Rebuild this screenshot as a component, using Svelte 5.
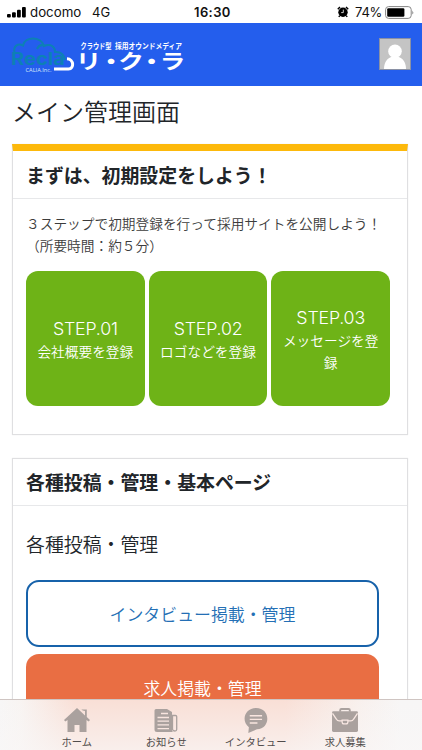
<script>
  const steps = [
    { no: 'STEP.01', label: '会社概要を登録' },
    { no: 'STEP.02', label: 'ロゴなどを登録' },
    { no: 'STEP.03', label: 'メッセージを登録' }
  ];
  const kana = [
    { ch: 'リ', x: 79.5 },
    { ch: '・', x: 102 },
    { ch: 'ク', x: 122 },
    { ch: '・', x: 142.5 },
    { ch: 'ラ', x: 163.5 }
  ];
</script>

<div class="screen">
  <div class="status">
    <svg class="signal" width="19" height="12" viewBox="0 0 19 12">
      <rect x="0" y="8" width="3.8" height="3.6" rx="1" />
      <rect x="5" y="6.3" width="3.8" height="5.3" rx="1" />
      <rect x="10" y="3.8" width="3.8" height="7.8" rx="1" />
      <rect x="15" y="1" width="3.8" height="10.6" rx="1" />
    </svg>
    <span class="carrier">docomo</span>
    <span class="net">4G</span>
    <span class="time">16:30</span>
    <svg class="alarm" width="12" height="12" viewBox="0 0 12 12">
      <circle cx="6" cy="6.2" r="4.7" />
      <path d="M.8 3.2 3 1M11.2 3.2 9 1M2.8 9.6l-1 1.3M9.2 9.6l1 1.3" fill="none" stroke="#000" stroke-width="1.5" />
      <path d="M6.3 3.6v3H4.2" fill="none" stroke="#fff" stroke-width=".8" />
    </svg>
    <span class="percent">74%</span>
    <svg class="battery" width="30" height="13" viewBox="0 0 30 13">
      <rect x=".6" y=".6" width="25.6" height="11.8" rx="3" fill="#fff" stroke="#858585" />
      <rect x="2.2" y="2.2" width="17.2" height="8.6" rx="1.2" />
      <path d="M27.4 4.5q1.7 2 0 4z" fill="#777" />
    </svg>
  </div>

  <header>
    <svg class="logo" width="180" height="40" viewBox="0 0 180 40">
      <g fill="none" stroke="#0d80b5" stroke-width="2.1">
        <path d="M5.500 15.500C4 9 9 6 14 8.500 16-1 32-1 35 9c7-3 11 1 11 6 6-.5 9 3 10 8" />
        <path d="M28 12c2-4 5-4.500 8-3" />
      </g>
      <text x="2" y="27.500" class="recla" textLength="54" lengthAdjust="spacingAndGlyphs">Recla</text>
      <text x="16.500" y="34.500" class="calia" textLength="26" lengthAdjust="spacingAndGlyphs">CALIA.Inc.</text>
      <path d="M45 32H59.500c6 0 5.500-10-1.500-10.300" fill="none" stroke="#fff" stroke-width="3" />
      <g class="cjk" fill="#fff">
        <text x="71.500" y="12.200" textLength="31" lengthAdjust="spacingAndGlyphs">クラウド型</text>
        <text x="106" y="12.200" textLength="67" lengthAdjust="spacingAndGlyphs">採用オウンドメディア</text>
        {#each kana as k}
          <text class="kana" transform="translate({k.x} 32.200) scale(1.25 1)">{k.ch}</text>
        {/each}
      </g>
    </svg>
    <svg class="avatar" width="32" height="32" viewBox="0 0 32 32">
      <rect x=".5" y=".5" width="31" height="31" fill="#c4c4c4" stroke="#8a91a5" />
      <circle cx="16" cy="13.2" r="6.8" fill="#fff" />
      <path d="M5 31c0-7 3.500-10.500 7-12h8c3.500 1.500 7 5 7 12z" fill="#fff" />
    </svg>
  </header>

  <main>
    <h1>メイン管理画面</h1>

    <section class="card setup">
      <h2>まずは、初期設定をしよう！</h2>
      <p>３ステップで初期登録を行って採用サイトを公開しよう！<br />（所要時間：約５分）</p>
      <div class="steps">
        {#each steps as step}
          <div class="step"><span class="no">{step.no}</span><span class="label">{step.label}</span></div>
        {/each}
      </div>
    </section>

    <section class="card posts">
      <h2>各種投稿・管理・基本ページ</h2>
      <h3>各種投稿・管理</h3>
      <div class="btn outline">インタビュー掲載・管理</div>
      <div class="btn solid">求人掲載・管理</div>
    </section>
  </main>

  <nav>
    <div class="item">
      <svg width="26" height="25" viewBox="0 0 26 25">
        <path d="M13 0 0 12l1.300 1.500L3.500 12v12h7v-7h5v7h7V12l2.200 1.500L26 12l-3.200-3V1.500h-5.500l1.500 1L21 3v4.500z" />
      </svg>
      <span>ホーム</span>
    </div>
    <div class="item">
      <svg width="24" height="25" viewBox="0 0 24 25">
        <path d="M2 1h11l5 3v18q0 2 1.500 2H3q-2.500 0-2.500-2.500V2.500Q.5 1 2 1z" />
        <path d="M18.500 7.500h3q1.200 0 1.200 1v13q0 1.500-1.800 1.500t-2.400-1.500z" fill="none" stroke="#aaa19e" stroke-width="1.300" />
        <path d="M7 5.500h7M3.500 9.500h11.500M3.500 13.200h11.500M3.500 16.900h11.500M3.500 20.600h11.500" stroke="#f8e5df" stroke-width="1.300" />
      </svg>
      <span>お知らせ</span>
    </div>
    <div class="item">
      <svg width="24" height="26" viewBox="0 0 24 26">
        <path d="M12 0c15.500 0 15.500 21.500 1 22.200L4 26l.6-6C-4 13.500.5 0 12 0z" />
        <path d="M5.500 8h12.800M5.500 11.800h12.800M5.500 15.500h8" stroke="#f9e6e0" stroke-width="1.500" />
      </svg>
      <span>インタビュー</span>
    </div>
    <div class="item">
      <svg width="28" height="26" viewBox="0 0 28 26">
        <path d="M9 4V2.300Q9 1 10.300 1h7.400Q19 1 19 2.300V4" fill="none" stroke="#aaa19e" stroke-width="2" />
        <path d="M2 3.500h24q1.500 0 1.500 1.500v18.500q0 1.500-1.500 1.500H2q-1.500 0-1.500-1.500V5Q.5 3.500 2 3.500z" />
        <path d="M1 5.500 5 11.500q1 2 3 2h3M27 5.500l-4 6q-1 2-3 2h-3M11 12.500h6v2q0 2-2 2h-2q-2 0-2-2z" fill="none" stroke="#f9e8e3" stroke-width="1.300" />
      </svg>
      <span>求人募集</span>
    </div>
  </nav>
</div>

<style>
  .screen {
    position: relative;
    display: flex;
    flex-direction: column;
    width: 422px;
    height: 750px;
    overflow: hidden;
    background: #fff;
    color: #212529;
    font-family: Inter, "Noto Sans CJK JP", sans-serif;
    font-weight: 350;
  }
  .screen * { box-sizing: border-box; }
  svg { display: block; flex: none; }
  .status {
    display: flex;
    align-items: center;
    flex: none;
    height: 23px;
    padding: 1px 5px 0 7px;
    color: #111;
    font: 400 13px/22px Inter, sans-serif;
  }
  .signal { margin: 0 4px 1px 0; }
  .carrier { width: 62px; font-size: 13.300px; }
  .net { width: 102px; }
  .time { width: 143px; font-weight: 600; letter-spacing: .4px; }
  .percent { width: 29px; margin-left: 6px; font-size: 13px; letter-spacing: -.2px; }
  .battery { margin-left: 1px; }
  header {
    display: flex;
    justify-content: space-between;
    flex: none;
    height: 63px;
    padding: 14px 11px 0 9px;
    background: #245eed;
  }
  .cjk { font: 700 7.500px "Noto Sans CJK JP", sans-serif; }
  .kana { font-size: 20.500px; text-anchor: middle; }
  .logo { overflow: visible; }
  .avatar { margin-top: 1px; }
  .recla { fill: #0d80b5; font: 700 17px Inter, sans-serif; }
  .calia { fill: #d7e8fb; font: 400 5.500px "Open Sans", sans-serif; }
  main {
    display: flex;
    flex-direction: column;
    flex: none;
    padding: 0 14px 0 12px;
  }
  h1, h2, h3, p { margin: 0; }
  h1 {
    height: 58px;
    font-size: 24px;
    font-weight: 350;
    line-height: 53px;
  }
  .card {
    display: flex;
    flex-direction: column;
    border: 1px solid #dfdfe1;
    box-shadow: 0 0 1px #e4e4e4;
  }
  .setup {
    height: 291px;
    margin-bottom: 23px;
    border-width: 7px 1px 1px;
    border-top-color: #fdb90b;
  }
  .posts { height: 310px; }
  h2 {
    height: 48px;
    padding-left: 13px;
    border-bottom: 1px solid #e7e8ea;
    font-size: 18.900px;
    font-weight: 600;
    line-height: 51px;
  }
  .posts h2 { height: 47px; line-height: 49px; }
  p {
    padding: 15px 0 0 13px;
    color: #3c3c3c;
    font-size: 13.700px;
    line-height: 21.500px;
    white-space: nowrap;
  }
  .steps { display: flex; gap: 4px; margin: 14px 17px 0 13px; }
  .step {
    display: flex;
    flex: 1 1 0;
    flex-direction: column;
    align-items: center;
    justify-content: center;
    height: 135px;
    padding: 2px 6px 0;
    border-radius: 12px;
    background: #6eb317;
    color: #fff;
    text-align: center;
  }
  .no { font-size: 17.800px; line-height: 24px; letter-spacing: -.2px; }
  .label { font-size: 13.700px; line-height: 22px; }
  h3 {
    padding-left: 13px;
    font-size: 18.900px;
    font-weight: 350;
    line-height: 28px;
    margin: 26px 0 20px;
  }
  .btn {
    display: flex;
    align-items: center;
    justify-content: center;
    flex: none;
    height: 67px;
    margin: 0 28px 7px 13px;
    border-radius: 13px;
    font-size: 16.900px;
  }
  .outline { border: 2px solid #1762aa; color: #246fb5; }
  .solid { background: #e96e43; color: #fff; }
  nav {
    position: absolute;
    inset: auto 0 0;
    display: flex;
    justify-content: center;
    height: 51px;
    padding: 8px 32px 0;
    border-top: 1px solid #cfc5c2;
    background: linear-gradient(to bottom, transparent, rgba(249, 247, 247, .65)), linear-gradient(to right, #f7f6f6 0, #f8f4f2 20px, #f9dfd6 75px, #f9dfd6 285px, #f8f0ed 360px, #f7f6f6 400px);
  }
  .item {
    display: flex;
    flex: 1;
    flex-direction: column;
    align-items: center;
    color: #514d4c;
    font-size: 10.300px;
    font-weight: 400;
    line-height: 14px;
  }
  .item svg { height: 25px; fill: #aaa19e; }
  .item span { margin-top: 2px; white-space: nowrap; }
</style>
